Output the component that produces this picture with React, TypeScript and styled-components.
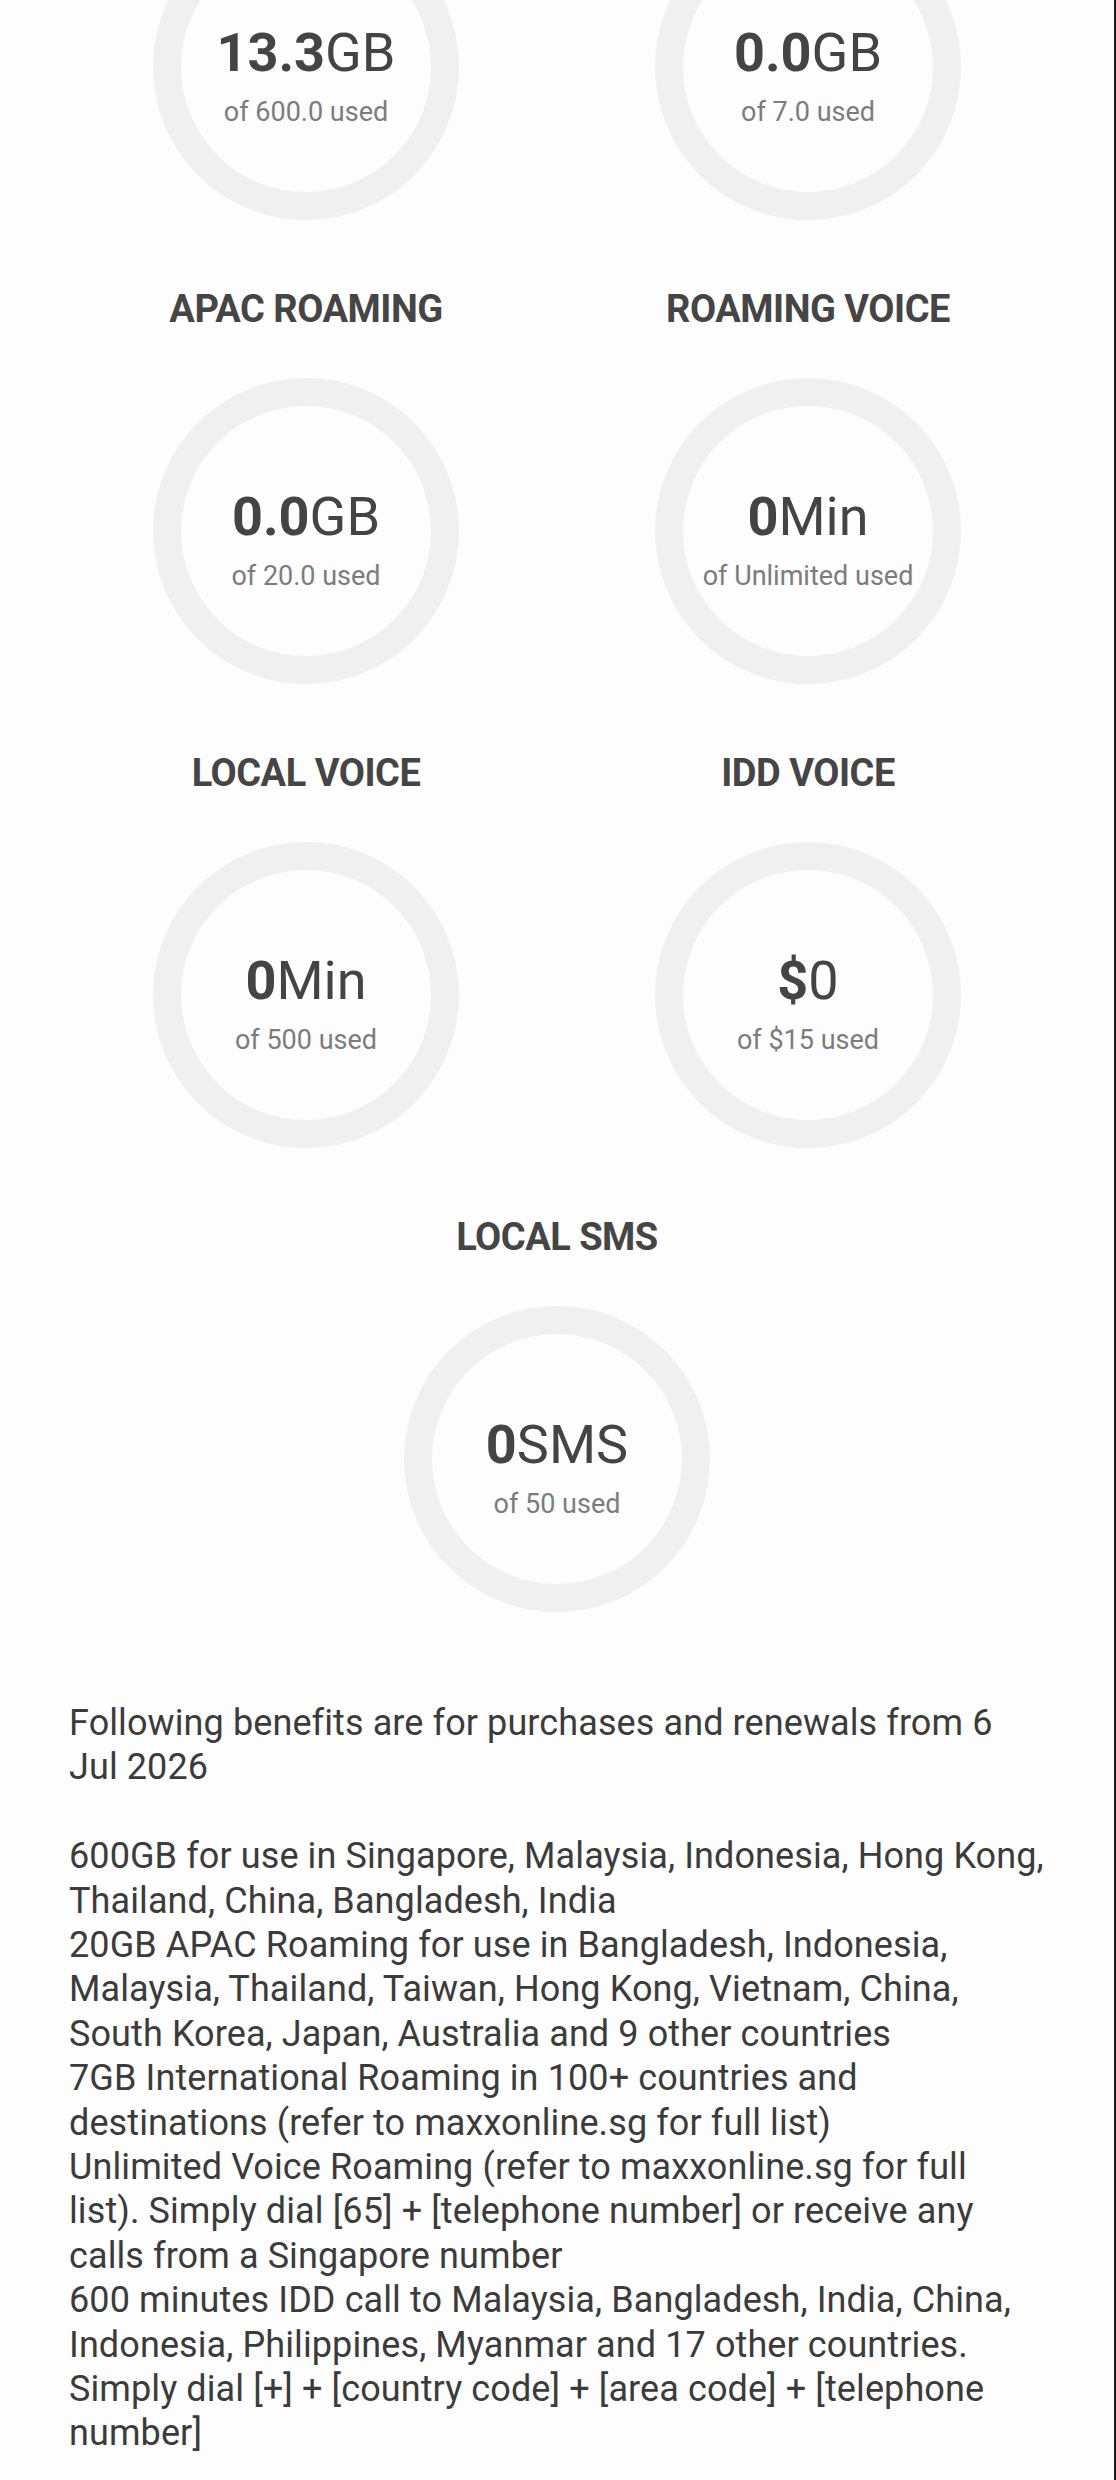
import React from 'react';
import styled, { createGlobalStyle } from 'styled-components';

const GlobalStyle = createGlobalStyle`
  html, body {
    margin: 0;
    padding: 0;
    background: #fdfdfd;
  }
  * {
    box-sizing: border-box;
  }
`;

interface Usage {
  title?: string;
  value: string;
  unit: string;
  total: string;
  wide?: boolean;
}

const usages: Usage[] = [
  { value: '13.3', unit: 'GB', total: '600.0' },
  { value: '0.0', unit: 'GB', total: '7.0' },
  { title: 'APAC ROAMING', value: '0.0', unit: 'GB', total: '20.0' },
  { title: 'ROAMING VOICE', value: '0', unit: 'Min', total: 'Unlimited' },
  { title: 'LOCAL VOICE', value: '0', unit: 'Min', total: '500' },
  { title: 'IDD VOICE', value: '$', unit: '0', total: '$15' },
  { title: 'LOCAL SMS', value: '0', unit: 'SMS', total: '50', wide: true }
];

// line breaks follow the wrapping of the app screen
const intro = ['Following benefits are for purchases and renewals from 6', 'Jul 2026'];

const benefits: string[][] = [
  ['600GB for use in Singapore, Malaysia, Indonesia, Hong Kong,', 'Thailand, China, Bangladesh, India'],
  [
    '20GB APAC Roaming for use in Bangladesh, Indonesia,',
    'Malaysia, Thailand, Taiwan, Hong Kong, Vietnam, China,',
    'South Korea, Japan, Australia and 9 other countries'
  ],
  ['7GB International Roaming in 100+ countries and', 'destinations (refer to maxxonline.sg for full list)'],
  [
    'Unlimited Voice Roaming (refer to maxxonline.sg for full',
    'list). Simply dial [65] + [telephone number] or receive any',
    'calls from a Singapore number'
  ],
  [
    '600 minutes IDD call to Malaysia, Bangladesh, India, China,',
    'Indonesia, Philippines, Myanmar and 17 other countries.',
    'Simply dial [+] + [country code] + [area code] + [telephone',
    'number]'
  ]
];

const Page = styled.div`
  width: 1116px;
  min-height: 2480px;
  overflow: hidden;
  background: #fdfdfd;
  border-right: 2px solid #1c1c1c;
  font-family: Roboto, 'Liberation Sans', sans-serif;
  color: #444444;
`;

const UsageGrid = styled.div`
  display: grid;
  grid-template-columns: 1fr 1fr;
  row-gap: 65px;
  margin-top: -86px;
  padding: 0 55px;
`;

const UsageItem = styled.div<{ $wide?: boolean }>`
  display: flex;
  flex-direction: column;
  align-items: center;
  grid-column: ${({ $wide }) => ($wide ? '1 / -1' : 'auto')};
`;

const UsageTitle = styled.h3`
  margin: 0 0 45px;
  font-size: 38px;
  line-height: 48px;
  font-weight: 700;
  letter-spacing: -0.5px;
  color: #454545;
`;

const Ring = styled.div`
  width: 306px;
  height: 306px;
  border-radius: 50%;
  border: 28px solid #f0f0f0;
  padding-top: 14px;
  display: flex;
  flex-direction: column;
  align-items: center;
  justify-content: center;
`;

const Amount = styled.div`
  font-size: 54px;
  line-height: 64px;
  font-weight: 400;
  color: #444444;

  b {
    font-weight: 700;
  }
`;

const Allowance = styled.div`
  margin-top: 11px;
  font-size: 27px;
  line-height: 32px;
  color: #7c7c7c;
`;

const Benefits = styled.div`
  margin-top: 89px;
  padding: 0 40px 0 69px;
  font-size: 36px;
  line-height: 44.4px;
  letter-spacing: 0.1px;
  color: #3b3b3b;
  white-space: nowrap;
`;

const Paragraph = styled.p<{ $gap?: boolean }>`
  margin: 0 0 ${({ $gap }) => ($gap ? '44.4px' : '0')};
`;

function Lines ({ lines }: { lines: string[] }) {
  return (
    <>
      {lines.map((line, i) => (
        <React.Fragment key={i}>
          {i > 0 && <br />}
          {line}
        </React.Fragment>
      ))}
    </>
  );
}

function UsageCard ({ usage }: { usage: Usage }) {
  return (
    <UsageItem $wide={usage.wide}>
      {usage.title && <UsageTitle>{usage.title}</UsageTitle>}
      <Ring>
        <Amount>
          <b>{usage.value}</b>
          {usage.unit}
        </Amount>
        <Allowance>of {usage.total} used</Allowance>
      </Ring>
    </UsageItem>
  );
}

export default function App () {
  return (
    <>
      <GlobalStyle />
      <Page>
        <UsageGrid>
          {usages.map((u, i) => (
            <UsageCard key={i} usage={u} />
          ))}
        </UsageGrid>
        <Benefits>
          <Paragraph $gap>
            <Lines lines={intro} />
          </Paragraph>
          {benefits.map((b, i) => (
            <Paragraph key={i}>
              <Lines lines={b} />
            </Paragraph>
          ))}
        </Benefits>
      </Page>
    </>
  );
}
